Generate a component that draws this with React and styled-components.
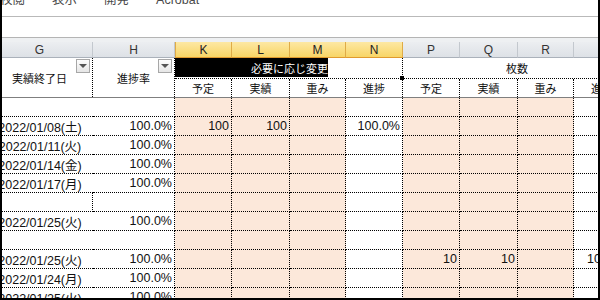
import React from "react";
import styled, { createGlobalStyle, css } from "styled-components";

const GlobalStyle = createGlobalStyle`
  html, body {
    margin: 0;
    padding: 0;
    background: #ffffff;
  }
  body {
    font-family: "Liberation Sans", "Noto Sans CJK JP", sans-serif;
  }
`;

const COLS = "106px 82px 57px 58px 56px 57px 57px 58px 56px 57px";
const PEACH = [2, 3, 4, 6, 7, 8];
const LETTERS = ["G", "H", "K", "L", "M", "N", "P", "Q", "R", "S"];
const SUBS = ["予定", "実績", "重み", "進捗", "予定", "実績", "重み", "進捗"];

const ROWS = [
  {},
  { date: "2022/01/08(土)", rate: "100.0%", vals: { 2: "100", 3: "100", 5: "100.0%" } },
  { date: "2022/01/11(火)", rate: "100.0%" },
  { date: "2022/01/14(金)", rate: "100.0%" },
  { date: "2022/01/17(月)", rate: "100.0%" },
  { edge: true },
  { date: "2022/01/25(火)", rate: "100.0%" },
  {},
  { date: "2022/01/25(火)", rate: "100.0%", vals: { 6: "10", 7: "10", 9: "10" } },
  { date: "2022/01/24(月)", rate: "100.0%" },
  { date: "2022/01/25(火)", rate: "100.0%" },
];

const Frame = styled.div`
  position: relative;
  width: 600px;
  height: 300px;
  box-sizing: border-box;
  border: 2px solid #000;
  border-top: none;
  overflow: hidden;
  background: #fff;
`;

const Ribbon = styled.div`
  display: flex;
  gap: 27px;
  height: 16px;
  margin-left: -2px;
  border-bottom: 1px solid #b9b9b9;
  overflow: hidden;
`;

const Tab = styled.span`
  font-size: 12.5px;
  line-height: 1;
  margin-top: -6px;
  color: #4a4a4a;
`;

const FormulaBar = styled.div`
  height: 20px;
  border-bottom: 1px solid #b4b4b4;
`;

const Gap = styled.div`
  height: 4px;
  background: #eef0f2;
`;

const Sheet = styled.div`
  margin-left: -15px;
  width: 640px;
`;

const GridRow = styled.div`
  display: grid;
  grid-template-columns: ${COLS};
`;

const ColHead = styled.div`
  height: 16px;
  box-sizing: border-box;
  display: flex;
  align-items: center;
  justify-content: center;
  font-size: 12px;
  color: #333;
  background: linear-gradient(#eceef1, #dde1e6);
  border-right: 1px solid #c3c8ce;
  border-bottom: 1px solid #aab1ba;
  ${({ $active }) =>
    $active &&
    css`
      color: #222;
      background: linear-gradient(#fde8a4, #f8d566);
      border-right-color: #dfab47;
      border-bottom-color: #e09a2e;
    `}
  ${({ $first }) =>
    $first &&
    css`
      border-left: 1px solid #dfab47;
    `}
`;

const HeadGrid = styled.div`
  display: grid;
  grid-template-columns: ${COLS};
  grid-template-rows: 21px 18px;
  border-bottom: 1px solid #7f7f7f;
`;

const HeadCell = styled.div`
  position: relative;
  box-sizing: border-box;
  display: flex;
  align-items: center;
  justify-content: center;
  font-size: 11px;
  color: #111;
  white-space: nowrap;
  ${({ $span }) =>
    $span &&
    css`
      grid-row: 1 / span 2;
    `}
  ${({ $cols }) =>
    $cols &&
    css`
      grid-column: ${$cols};
      grid-row: 1;
      border-bottom: 1px dotted #000;
    `}
  ${({ $right }) =>
    $right &&
    css`
      border-right: 1px dotted #000;
    `}
`;

const EditCell = styled(HeadCell)`
  justify-content: flex-start;
  align-items: flex-start;
  overflow: visible;
`;

const Highlight = styled.div`
  width: 153px;
  height: 19px;
  background: #000;
  color: #fff;
  font-size: 11px;
  display: flex;
  align-items: center;
  justify-content: flex-end;
`;

const Handle = styled.div`
  position: absolute;
  right: -3px;
  bottom: -3px;
  width: 4px;
  height: 4px;
  background: #000;
  border: 1px solid #fff;
`;

const Filter = styled.div`
  position: absolute;
  top: 1px;
  right: 2px;
  width: 14px;
  height: 14px;
  box-sizing: border-box;
  border: 1px solid #a7a7a7;
  background: linear-gradient(#fdfdfd, #e6e6e6);
  display: flex;
  align-items: center;
  justify-content: center;

  &::after {
    content: "";
    border-left: 4px solid transparent;
    border-right: 4px solid transparent;
    border-top: 4px solid #555;
  }
`;

const Cell = styled.div`
  height: 19px;
  box-sizing: border-box;
  display: flex;
  align-items: center;
  justify-content: ${({ $align }) => $align || "flex-end"};
  padding-right: ${({ $align, $pad }) =>
    $align === "center" ? "0" : `${$pad || 2}px`};
  font-size: 12.5px;
  color: #111;
  white-space: nowrap;
  background: ${({ $peach }) => ($peach ? "#fce8da" : "#fff")};
  border-bottom: 1px dotted #000;
  border-right: ${({ $line }) => ($line ? "1px dotted #000" : "none")};
`;

function DataRow({ row }) {
  const vals = row.vals || {};
  return (
    <GridRow>
      <Cell $align="center" $line={row.edge}>
        {row.date}
      </Cell>
      <Cell $line>{row.rate}</Cell>
      {[2, 3, 4, 5, 6, 7, 8, 9].map((i) => (
        <Cell
          key={i}
          $line
          $peach={PEACH.includes(i)}
          $pad={i === 9 ? 29 : 2}
        >
          {vals[i]}
        </Cell>
      ))}
    </GridRow>
  );
}

export default function App() {
  return (
    <>
      <GlobalStyle />
      <Frame>
        <Ribbon>
          <Tab>校閲</Tab>
          <Tab>表示</Tab>
          <Tab>開発</Tab>
          <Tab>Acrobat</Tab>
        </Ribbon>
        <FormulaBar />
        <Gap />
        <Sheet>
          <GridRow>
            {LETTERS.map((l, i) => (
              <ColHead key={l} $active={i >= 2 && i <= 5} $first={i === 2}>
                {l}
              </ColHead>
            ))}
          </GridRow>
          <HeadGrid>
            <HeadCell $span $right>
              実績終了日
              <Filter />
            </HeadCell>
            <HeadCell $span $right>
              進捗率
              <Filter />
            </HeadCell>
            <EditCell $cols="3 / 7" $right>
              <Highlight>必要に応じ変更</Highlight>
              <Handle />
            </EditCell>
            <HeadCell $cols="7 / 11">枚数</HeadCell>
            {SUBS.map((s, i) => (
              <HeadCell key={i} $right>
                {s}
              </HeadCell>
            ))}
          </HeadGrid>
          {ROWS.map((row, i) => (
            <DataRow key={i} row={row} />
          ))}
        </Sheet>
      </Frame>
    </>
  );
}
